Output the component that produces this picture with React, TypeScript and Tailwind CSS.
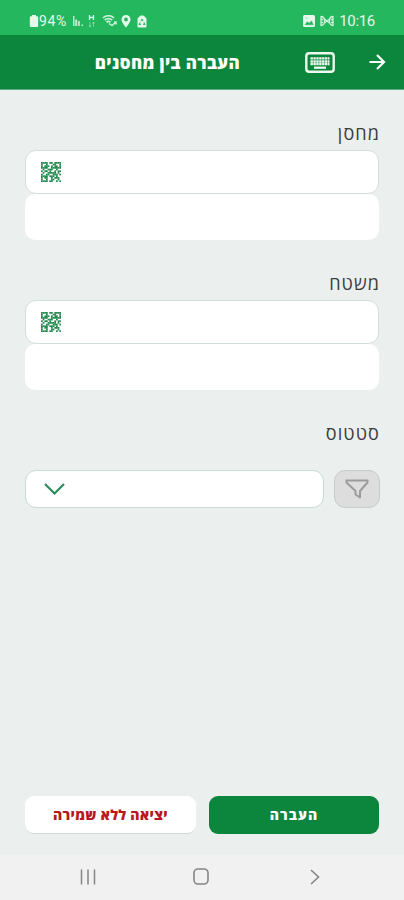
import { useState } from "react";

// Module map of the QR glyph, one string per row.
const QR_ROWS = [
  "111101101111",
  "100100011001",
  "101110101101",
  "111100111111",
  "010011100100",
  "101101001011",
  "010011111010",
  "100110011101",
  "111101110100",
  "101100101110",
  "100100110010",
  "111101100101",
];

function QrIcon() {
  return (
    <svg viewBox="0 0 12 12" className="h-5 w-5" fill="#0c7f3b" opacity="0.9" aria-hidden="true">
      {QR_ROWS.flatMap((row, y) =>
        row.split("").map((cell, x) => (cell === "1" ? <rect key={`${x}-${y}`} x={x} y={y} width="1.05" height="1.05" /> : null)),
      )}
    </svg>
  );
}

function StatusBar() {
  return (
    <div dir="ltr" className="flex h-[35px] items-center justify-between bg-[#25b75e] pt-[7px] pr-[29px] pl-[29px] font-[Roboto,sans-serif] text-[14px] text-[#e3f9e9]">
      <div className="flex items-center">
        <svg width="10" height="12" viewBox="0 0 10 12" fill="currentColor">
          <path d="M3 0h4v1.200h1.200a1 1 0 0 1 1 1V11a1 1 0 0 1-1 1H1.800a1 1 0 0 1-1-1V2.200a1 1 0 0 1 1-1H3z" />
        </svg>
        <span className="w-[28px] text-[14px] leading-4 tracking-[0.6px]">94%</span>
        <svg width="11" height="12" viewBox="0 0 11 12" fill="currentColor" className="ml-[6px]" opacity="0.8">
          <path d="M0 1h1.500v10H0zM2.200 4.500h2v6.500h-2zM5 6h1.800v5H5zM8.500 9.500H10V11H8.500z" />
        </svg>
        <svg width="8" height="13" viewBox="0 0 8 13" fill="none" stroke="currentColor" className="ml-[4px]">
          <path d="M1.500 0v5M5.500 0v5M1.500 2.500h4" strokeWidth="1.300" />
          <path d="M2 7v5M1 10.500l1 1.500 1-1.500M5.500 12V7M4.500 8.500l1-1.500 1 1.500" opacity="0.4" />
        </svg>
        <svg width="16" height="12" viewBox="0 0 16 12" fill="none" stroke="currentColor" className="ml-[6px]" opacity="0.85">
          <path d="M1 3C4 0 9 0 12 3M2.800 5.200c2-2 5.400-2 7.400 0M4.500 7.300c1.200-1.200 2.800-1.200 4 0" strokeWidth="1.700" />
          <path d="M7 8.500l3 2 4-3.500M12 7h2v2.500" strokeWidth="1.500" />
        </svg>
        <svg width="10" height="13" viewBox="0 0 10 13" fill="currentColor" className="ml-[3px]">
          <path fillRule="evenodd" d="M5 0a4.500 4.500 0 0 0-4.500 4.500C.5 7.500 5 12.500 5 12.500s4.500-5 4.500-8A4.500 4.500 0 0 0 5 0zm0 2.600a1.900 1.900 0 1 1 0 3.800 1.900 1.900 0 0 1 0-3.800z" />
        </svg>
        <svg width="10" height="13" viewBox="0 0 10 13" className="ml-[6px]">
          <path d="M2.200 1.800C3 0 7 0 7.800 1.800L9.500 3.500v8a1 1 0 0 1-1 1h-7a1 1 0 0 1-1-1v-8z" fill="currentColor" />
          <path d="M5 4.300L3.900 6M5 4.300L6.100 6M3.200 7.500l-.9 2h1.500M6.800 7.500l.9 2H6.200" stroke="#25b75e" strokeWidth="1.100" fill="none" />
        </svg>
      </div>
      <div className="flex items-center">
        <svg width="12" height="12" viewBox="0 0 12 12">
          <rect width="12" height="12" rx="1.500" fill="currentColor" />
          <path d="M2 9.800l2.300-3 1.800 1.500L8.500 6l1.800 3.800zM2.500 3h2" fill="#25b75e" stroke="#25b75e" strokeWidth="0.500" />
        </svg>
        <svg width="14" height="12" viewBox="0 0 14 12" fill="none" stroke="currentColor" strokeWidth="1.300" className="mr-[5px] ml-[5px]" opacity="0.9">
          <path d="M1 1v10M1 1.500c2.500 0 3.500 2 3.500 4.500S3.500 10.500 1 10.500M1 4.500h2M1 7.500h2M13 1v10M13 1.500C10.500 1.500 9.500 3.500 9.500 6s1 4.500 3.500 4.500M11 4.500h2M11 7.500h2M4.500 4l5 4M4.500 8l5-4" />
        </svg>
        <span className="text-[15px] leading-4 tracking-[-0.3px]">10:16</span>
      </div>
    </div>
  );
}

function Header() {
  return (
    <header className="flex h-[55px] items-center border-b border-[#5fac7e] bg-[#0b863c] pr-[18px] text-white">
      <button aria-label="חזרה" className="flex">
        <svg width="17" height="18" viewBox="0 0 17 18" fill="none" stroke="currentColor" strokeWidth="2.200">
          <path d="M0.500 9h14.500M8 2l7 7-7 7" />
        </svg>
      </button>
      <button aria-label="מקלדת" className="mr-[34px] flex">
        <svg width="30" height="21" viewBox="0 0 30 21" fill="none" stroke="#eefaf0">
          <rect x="1.300" y="1.300" width="27.400" height="18.400" rx="2.800" strokeWidth="2.400" />
          <path d="M5.500 6.300h19M5.500 9.300h19M5.500 12h19" strokeWidth="2.300" strokeDasharray="2.400 0.500" />
          <path d="M9 15.700h12" strokeWidth="2.300" />
        </svg>
      </button>
      <h1 className="mr-[65px] pt-px text-[17px] leading-6 font-extrabold tracking-[0.35px] whitespace-nowrap">העברה בין מחסנים</h1>
    </header>
  );
}

function ScanField({ label }: { label: string }) {
  const [value, setValue] = useState("");

  return (
    <section className="h-[150px]">
      <label className="-mr-px block h-[31px] text-[18px] leading-7 tracking-[1.1px] text-[#3b3d3c]">{label}</label>
      <div className="flex h-[44px] items-center rounded-[11px] border border-[#d3dfda] bg-white pb-px pl-[15px]">
        <input
          aria-label={label}
          value={value}
          onChange={(e) => setValue(e.target.value)}
          className="min-w-0 flex-1 bg-transparent px-4 outline-none"
        />
        <QrIcon />
      </div>
      <div className="h-[46px] rounded-[10px] bg-white" />
    </section>
  );
}

export default function App() {
  return (
    <div dir="rtl" className="flex h-[900px] w-[404px] flex-col overflow-hidden bg-[#ebefee] font-['Open_Sans','Noto_Sans',sans-serif]">
      <StatusBar />
      <Header />

      <main className="flex flex-1 flex-col px-[25px] pt-[29px]">
        <ScanField label="מחסן" />
        <ScanField label="משטח" />

        <section>
          <div className="-mr-px h-[51px] text-[18px] leading-7 tracking-[1.1px] text-[#3b3d3c]">סטטוס</div>
          <div className="-mr-px flex gap-[10px]">
            <button aria-label="סינון" className="flex h-[38px] w-[46px] items-center justify-center rounded-[11px] border border-[#c5cdc9] bg-[#dcdddc]">
              <svg width="24" height="20" viewBox="0 0 24 20" fill="none" stroke="#9a9b9a" strokeWidth="2" strokeLinejoin="round">
                <path d="M1.500 1.500h21v2L15 12v6.500l-4.500-3V12L1.500 3.500z" />
              </svg>
            </button>
            <button aria-label="סטטוס" className="flex h-[38px] flex-1 items-center justify-end rounded-[11px] border border-[#c5ddd3] bg-white pl-[18px]">
              <svg width="21" height="12" viewBox="0 0 21 12" fill="none" stroke="#2e8b5b" strokeWidth="2.200">
                <path d="M1 1l9.500 9.500L20 1" />
              </svg>
            </button>
          </div>
        </section>

        <div className="mt-auto mb-[21px] flex h-[38px] gap-[13px] text-[14px]">
          <button className="w-[170px] rounded-[9px] bg-[#0b863c] pb-0.5 font-extrabold tracking-[1px] text-white">העברה</button>
          <button className="flex-1 rounded-[9px] border-b border-[#d2d6d4] bg-white font-extrabold tracking-[0.3px] text-[#b81620]">יציאה ללא שמירה</button>
        </div>
      </main>

      <nav dir="ltr" className="flex h-[45px] items-center bg-[#f1f1f1] pb-[2px] pl-[80px] text-[#858585]">
        <svg width="16" height="16" viewBox="0 0 16 16" stroke="currentColor" strokeWidth="1.500">
          <path d="M1.500 0.500v15M8 0.500v15M14.500 0.500v15" />
        </svg>
        <svg width="16" height="17" viewBox="0 0 16 17" fill="none" stroke="currentColor" strokeWidth="1.600" className="ml-[97px]">
          <rect x="1" y="1" width="14" height="15" rx="4" />
        </svg>
        <svg width="10" height="16" viewBox="0 0 10 16" fill="none" stroke="currentColor" strokeWidth="1.600" className="ml-[101px]">
          <path d="M1 1l7.500 7L1 15" />
        </svg>
      </nav>
    </div>
  );
}
